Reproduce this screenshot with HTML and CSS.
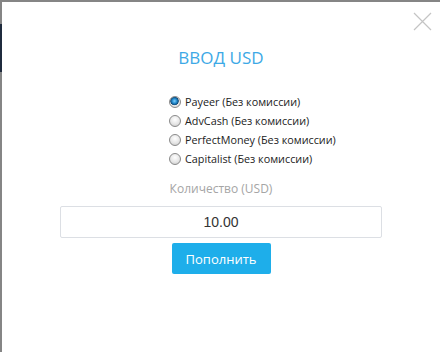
FILE: index.html
```html
<!DOCTYPE html>
<html lang="ru">
<head>
<meta charset="utf-8">
<link rel="stylesheet" href="styles.css">
</head>
<body>
<div class="topbar"></div>
<div class="main">
  <div class="gutter"><div class="gutter-dark"></div></div>
  <div class="panel">
    <button class="close" aria-label="close">
      <svg width="19" height="19" viewBox="0 0 19 19"><path d="M1 1 L18 18 M18 1 L1 18" stroke="#c4c4c4" stroke-width="1.2" fill="none"/></svg>
    </button>
    <h1 class="title">ВВОД USD</h1>
    <div class="methods">
      <label class="method"><input type="radio" name="m" checked><span>Payeer (Без комиссии)</span></label>
      <label class="method"><input type="radio" name="m"><span>AdvCash (Без комиссии)</span></label>
      <label class="method"><input type="radio" name="m"><span>PerfectMoney (Без комиссии)</span></label>
      <label class="method"><input type="radio" name="m"><span>Capitalist (Без комиссии)</span></label>
    </div>
    <div class="qty-label">Количество (USD)</div>
    <input class="amount" type="text" value="10.00">
    <button class="submit">Пополнить</button>
  </div>
</div>
</body>
</html>
```
FILE: styles.css
```css
html, body {
  margin: 0;
  padding: 0;
  width: 440px;
  height: 352px;
  overflow: hidden;
  background: #858585;
}
.topbar {
  height: 2px;
  background: #858585;
}
.main {
  display: flex;
  height: 350px;
}
.gutter {
  width: 2px;
  background: #858585;
  padding-top: 22px;
  box-sizing: border-box;
}
.gutter-dark {
  height: 48px;
  background: #1f2b3d;
}
.panel {
  position: relative;
  flex: 1;
  background: #fff;
  display: flex;
  flex-direction: column;
  align-items: center;
  padding-top: 46px;
  box-sizing: border-box;
}
.close {
  position: absolute;
  top: 10px;
  right: 8px;
  width: 19px;
  height: 19px;
  padding: 0;
  border: 0;
  background: none;
}
.close svg { display: block; }
.title {
  margin: 0;
  font-family: "Open Sans", sans-serif;
  font-weight: 400;
  font-size: 17px;
  line-height: 20px;
  color: #3da9e6;
}
.methods {
  align-self: flex-start;
  margin-left: 167px;
  margin-top: 24px;
  display: flex;
  flex-direction: column;
}
.method {
  display: flex;
  align-items: center;
  height: 19px;
  font-family: "Open Sans", sans-serif;
  font-size: 10.8px;
  color: #222;
}
.method input {
  appearance: none;
  -webkit-appearance: none;
  margin: 0 4px 0 0;
  width: 12px;
  height: 12px;
  border-radius: 50%;
  border: 1px solid #8a8a8a;
  background: radial-gradient(circle at 50% 35%, #ffffff 0%, #e6e6e6 55%, #c4c4c4 100%);
  box-sizing: border-box;
}
.method input:checked {
  background: radial-gradient(circle at 45% 40%, #7fd0ff 0%, #1f86c9 30%, #124c7a 48%, #e9e9e9 56%, #d0d0d0 100%);
}
.qty-label {
  margin-top: 13px;
  font-family: "Open Sans", sans-serif;
  font-size: 12px;
  line-height: 16px;
  color: #a5a5a5;
}
.amount {
  margin-top: 9px;
  width: 322px;
  height: 32px;
  box-sizing: border-box;
  border: 1px solid #dcdfe4;
  border-radius: 2px;
  text-align: center;
  font-family: "Liberation Sans", Arial, sans-serif;
  font-size: 14px;
  color: #333;
  padding: 0;
  outline: none;
}
.submit {
  margin-top: 5px;
  width: 99px;
  height: 31px;
  border: 0;
  border-radius: 2px;
  background: #1eaeea;
  color: #fff;
  font-family: "Open Sans", sans-serif;
  font-size: 13px;
  padding: 0;
}
```
